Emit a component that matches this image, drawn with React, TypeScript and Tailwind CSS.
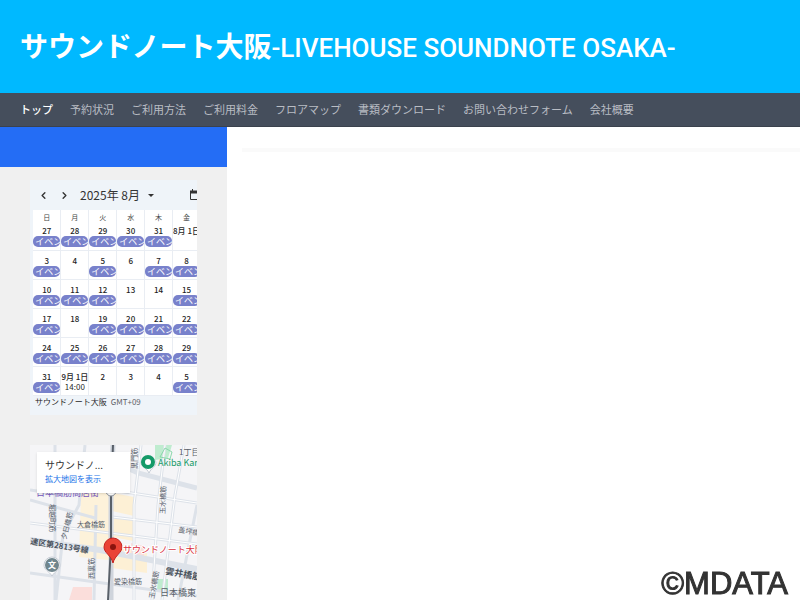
import React from "react";
import { ChevronLeft, ChevronRight } from "lucide-react";

const navItems = [
  "トップ",
  "予約状況",
  "ご利用方法",
  "ご利用料金",
  "フロアマップ",
  "書類ダウンロード",
  "お問い合わせフォーム",
  "会社概要",
];

const weekdays = ["日", "月", "火", "水", "木", "金"];

type Day = { label: string; event?: boolean; time?: string };

const weeks: Day[][] = [
  [
    { label: "27", event: true },
    { label: "28", event: true },
    { label: "29", event: true },
    { label: "30", event: true },
    { label: "31", event: true },
    { label: "8月 1日" },
  ],
  [
    { label: "3", event: true },
    { label: "4" },
    { label: "5", event: true },
    { label: "6" },
    { label: "7", event: true },
    { label: "8", event: true },
  ],
  [
    { label: "10", event: true },
    { label: "11", event: true },
    { label: "12", event: true },
    { label: "13" },
    { label: "14" },
    { label: "15", event: true },
  ],
  [
    { label: "17", event: true },
    { label: "18" },
    { label: "19", event: true },
    { label: "20", event: true },
    { label: "21", event: true },
    { label: "22", event: true },
  ],
  [
    { label: "24", event: true },
    { label: "25", event: true },
    { label: "26", event: true },
    { label: "27", event: true },
    { label: "28", event: true },
    { label: "29", event: true },
  ],
  [
    { label: "31", event: true },
    { label: "9月 1日", time: "14:00" },
    { label: "2" },
    { label: "3" },
    { label: "4" },
    { label: "5", event: true },
  ],
];

function Calendar() {
  return (
    <section aria-label="カレンダー" className="h-[235px] overflow-hidden bg-[#eff4f9]">
      <div className="flex h-[30px] items-center pl-2 text-[#333]">
        <button aria-label="前の月" className="flex w-[11px] justify-center">
          <ChevronLeft size={11} strokeWidth={3} />
        </button>
        <button aria-label="次の月" className="ml-[10px] flex w-[11px] justify-center">
          <ChevronRight size={11} strokeWidth={3} />
        </button>
        <button className="ml-[10px] flex items-center gap-2 whitespace-nowrap text-xs">
          2025年 8月
          <svg width="6" height="3" viewBox="0 0 6 3" fill="currentColor" aria-hidden="true">
            <path d="M0 0h6L3 3z" />
          </svg>
        </button>
        <button aria-label="表示形式" className="ml-auto">
          <svg width="8" height="12" viewBox="0 0 8 12" fill="none" stroke="currentColor" aria-hidden="true">
            <path d="M8 10.500H1.500V2.500H8" />
            <path d="M1 3h7" strokeWidth="3" />
            <path d="M3.500 0v3" />
          </svg>
        </button>
      </div>
      <table className="ml-[3px] w-[168px] table-fixed border-collapse bg-white text-center text-[8px] text-[#1f1f1f]">
        <thead>
          <tr className="h-[11px]">
            {weekdays.map((d) => (
              <th key={d} className="border-r border-[#e9edf3] p-0 pt-[3px] text-[7px] leading-[8px] font-normal text-[#444746]">
                {d}
              </th>
            ))}
          </tr>
        </thead>
        <tbody>
          {weeks.map((week, i) => (
            <tr key={i} className="h-[29px]">
              {week.map((day) => (
                <td key={day.label} className="overflow-hidden border-r border-b border-[#e9edf3] p-0 align-top">
                  <div className="flex h-[28px] flex-col items-center pt-[5px]">
                    <span className="h-[10px] leading-[10px] font-medium whitespace-nowrap">{day.label}</span>
                    {day.event && (
                      <button className="h-[11px] w-[27px] overflow-hidden rounded-[5px] bg-[#7881cb] pl-[2px] text-left text-[9px] leading-[11px] whitespace-nowrap text-white">
                        イベント
                      </button>
                    )}
                    {day.time && <span className="leading-[9px]">{day.time}</span>}
                  </div>
                </td>
              ))}
            </tr>
          ))}
        </tbody>
      </table>
      <p className="pl-[5px] text-[8px] leading-[12px] whitespace-nowrap text-[#1f1f1f]">
        サウンドノート大阪 <span className="ml-[2px] text-[#5f6368]">GMT+09</span>
      </p>
    </section>
  );
}

function VenueMap() {
  return (
    <section aria-label="地図" className="relative h-[155px] overflow-hidden bg-[#f5f5f7]">
      <svg viewBox="0 0 167 155" width="167" height="155" className="block" role="img" aria-label="サウンドノート大阪 周辺地図">
        <path d="M51 48L79 48V115L49 112z" fill="#fdf2da" />
        <path d="M83 48L104 52V71L82 66zM84 71L103 75V96L83 92zM83 99L117 108V128L82 123z" fill="#fdf0d5" />
        <path d="M43 142h19v13H39zM101 98l13 3v13l-13-3z" fill="#fbdedb" />
        <path d="M125 0h17l-4 13-13 2zM128 134h10v11h-11z" fill="#bfeccf" />
        <g fill="none" stroke="#dde2e9" strokeWidth="3">
          <path d="M0 78L167 99M0 128L167 151M82 72L167 82M82 45L167 58" />
          <path d="M25 0V155M55 0L49 60L33 90L26 155M66 60L64 155M111 0L104 60V155M135 0L128 60L122 155M154 0L145 50L132 155M167 60L148 155" />
          <path d="M0 45L28 49M0 55L65 73" />
          <path d="M97 23L108 28L167 43" strokeWidth="5" />
          <path d="M0 95L70 105L167 124" strokeWidth="6" />
        </g>
        <g fill="none" stroke="#fff" strokeWidth="1">
          <path d="M0 78L167 99M82 72L167 82M82 45L167 58M111 0L104 60V155M135 0L128 60L122 155M154 0L145 50L132 155" />
        </g>
        <path d="M130 12l5-9 7 4-2 7z" fill="none" stroke="#8bd8ac" />
        <path d="M83 0L81 50V155" fill="none" stroke="#cfd4dc" strokeWidth="5" />
        <path d="M83 0L81 50V100L78 155" fill="none" stroke="#596069" strokeWidth="2" />
        <g fill="#58606b" fontSize="7">
          <text x="47" y="82">大倉橋筋</text>
          <text x="148" y="87" transform="rotate(10 148 87)">盖坪橋</text>
          <text x="84" y="139">愛染橋筋</text>
          <text x="135" y="69" transform="rotate(-88 135 69)">玉水橋筋</text>
          <text x="124" y="154" transform="rotate(-80 124 154)">玉水橋筋</text>
          <text x="64" y="134" transform="rotate(-90 64 134)">西裏筋</text>
          <text x="36" y="95" transform="rotate(-76 36 95)">夕日橋筋</text>
          <text x="20" y="59" transform="rotate(90 20 59)">堀越町筋</text>
          <text x="107" y="24" transform="rotate(-90 107 24)">黒門筋</text>
        </g>
        <g fill="#4b535e" fontWeight="700">
          <text x="0" y="99" fontSize="8" transform="rotate(9 0 99)">速区第2813号線</text>
          <text x="135" y="129" fontSize="9" transform="rotate(10 135 129)">雲井橋筋</text>
        </g>
        <g fill="#596069" fontSize="9">
          <text x="149" y="10" fontSize="8">1丁目</text>
          <text x="130" y="151">日本橋東</text>
        </g>
        <text x="6" y="51" fontSize="9" fill="#7657bd">日本橋筋商店街</text>
        <circle cx="81" cy="46" r="5" fill="#fff" stroke="#8c929b" />
        <path d="M111 17a8 8 0 0 1 15 0c0 5-5 6-7 11-2-5-8-6-8-11z" fill="#fff" stroke="#c6ccd5" />
        <circle cx="118" cy="17" r="7" fill="#159a68" />
        <circle cx="118" cy="17" r="3" fill="#fff" />
        <text x="128" y="21" fontSize="9" fill="#159a68">Akiba Kan</text>
        <path d="M14 120a8 8 0 0 1 16 0c0 5-5 6-8 11-3-5-8-6-8-11z" fill="#fff" stroke="#c6ccd5" />
        <circle cx="22" cy="120" r="7" fill="#6f858d" />
        <text x="18" y="123" fontSize="8" fontWeight="700" fill="#fff">文</text>
        <path d="M83 93a9 9 0 0 1 9 9c0 6-7 8-9 16-2-8-9-10-9-16a9 9 0 0 1 9-9z" fill="#ea4335" stroke="#c5221f" />
        <circle cx="83" cy="102" r="3" fill="#8b130e" />
        <text x="93" y="108" fontSize="9" fill="#d93040" stroke="#fff" strokeWidth="2" paintOrder="stroke">
          サウンドノート大阪
        </text>
      </svg>
      <div className="absolute top-[7px] left-[7px] flex h-[41px] w-[93px] flex-col items-start bg-white pt-[5px] pl-2 shadow-sm">
        <p className="text-[10px] leading-[15px] whitespace-nowrap text-[#333]">サウンドノ...</p>
        <a href="#map" className="text-[8px] leading-[14px] whitespace-nowrap text-[#1a73e8]">
          拡大地図を表示
        </a>
      </div>
    </section>
  );
}

export default function App() {
  return (
    <div className="flex min-h-screen flex-col bg-white font-['Noto_Sans_CJK_JP',sans-serif]">
      <header className="bg-[#00b9ff] px-5 pt-[23px] pb-[25px]">
        <h1 className="text-[28px] leading-[45px] font-bold whitespace-nowrap text-white">
          サウンドノート大阪
          <span className="font-['Roboto',sans-serif] text-[26px] leading-none font-medium">-LIVEHOUSE SOUNDNOTE OSAKA-</span>
        </h1>
      </header>
      <nav className="border-b border-[#3b424d] bg-[#454e5c]">
        <ul className="flex h-[33px] items-center gap-[17px] px-5 text-[11px] whitespace-nowrap text-[#b9bdc4]">
          {navItems.map((item, i) => (
            <li key={item}>
              <a href="#" className={i === 0 ? "font-medium text-white" : ""}>
                {item}
              </a>
            </li>
          ))}
        </ul>
      </nav>
      <div className="flex flex-1">
        <aside className="w-[227px] shrink-0 bg-[#f0f0f0]">
          <div className="h-[40px] bg-[#246df5]" />
          <div className="flex flex-col gap-[30px] pt-[13px] pr-[30px] pl-[30px]">
            <Calendar />
            <VenueMap />
          </div>
        </aside>
        <main className="flex-1 pt-[21px] pl-[15px]">
          <hr className="border-t-4 border-[#fafafa]" />
        </main>
      </div>
      <p className="fixed right-[12px] bottom-0 font-['Liberation_Sans',Arial,sans-serif] text-[31px] leading-[33px] text-[#333] [-webkit-text-stroke:1px_#333]">
        ©MDATA
      </p>
    </div>
  );
}
